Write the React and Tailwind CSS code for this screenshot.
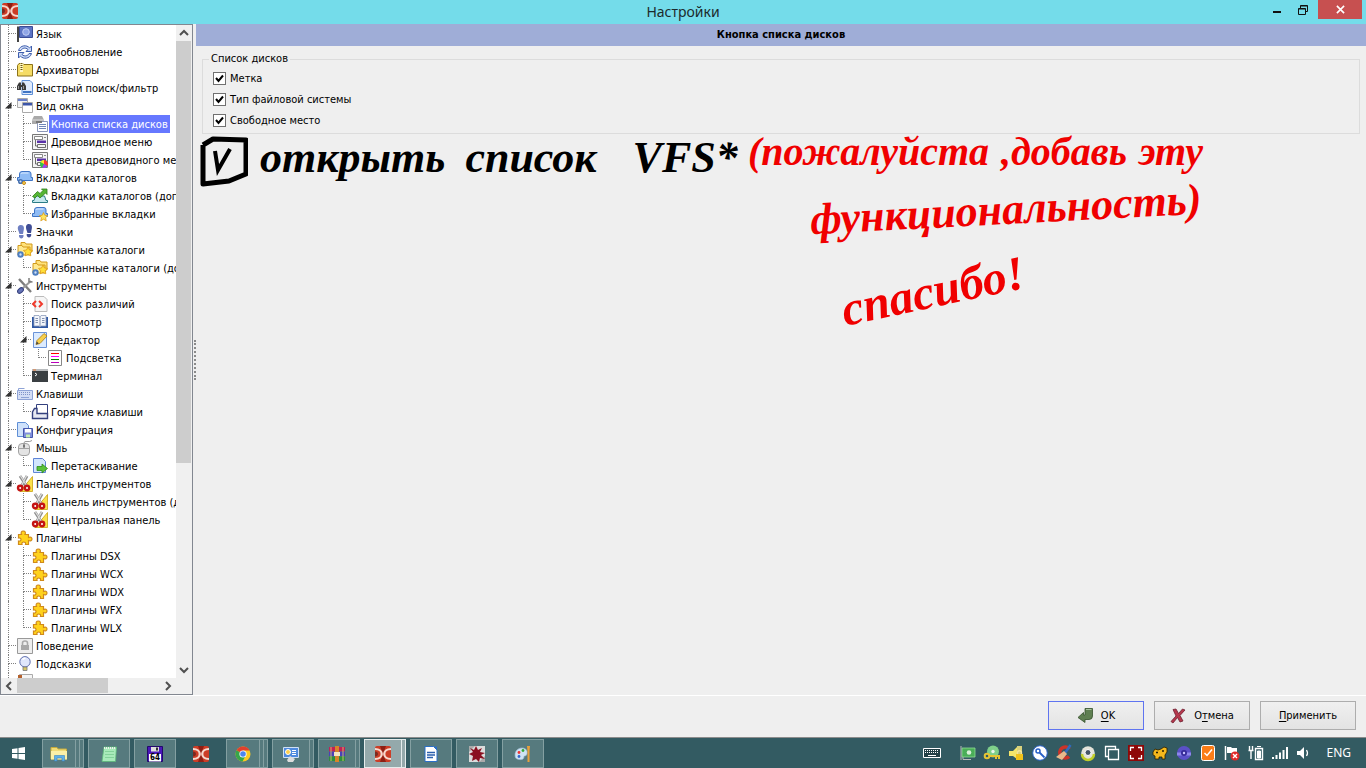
// App.jsx
// Settings window: page tree on the left, disk list options on the right,
// dialog buttons and the desktop taskbar along the bottom.

import { useState } from 'react';
import clsx from 'clsx';

const PUZZLE = (
  <path
    d="M1.5 4.5h3c-1-2 0-3.5 1.8-3.5S9 2.5 8 4.5h3.5v3c2-1 3.5 0 3.5 1.5s-1.5 2.5-3.5 1.5v4H8.5c.5-2-.5-2.5-1.8-2.5s-2.2.8-1.7 2.5H1.5v-3.5c2 .5 2.5-.5 2.5-1.5s-1-2-2.5-1.5z"
    fill="#ffd21c"
    stroke="#d08a1c"
    strokeWidth="1.2"
  />
);

const SCISSORS = (
  <>
    <path d="M15.5.5v15H3z" fill="#fbe14a" stroke="#c9a312" strokeWidth=".8" />
    <path d="M3 0l6.5 10M10 0L4.5 10" stroke="#8d8d8d" strokeWidth="2.8" />
    <path d="M3.5 0l6 9.5M9.5 0l-5 9.5" stroke="#dedede" strokeWidth="1.2" />
    <circle cx="3.2" cy="12" r="2.2" fill="#fff" stroke="#c41414" strokeWidth="2.4" />
    <circle cx="10" cy="12" r="2.2" fill="#fff" stroke="#c41414" strokeWidth="2.4" />
  </>
);

const FOLDERS = (
  <>
    <path d="M4 .5h4L9 2h6v8H4z" fill="#ffe27a" stroke="#d29a1c" />
    <path d="M1 3.5h4L6 5h7v8H1z" fill="#ffe98f" stroke="#d29a1c" />
    <path d="M11 5l1.500 3 3 .4-2.200 2.200.5 3.200-2.800-1.500-2.800 1.500.5-3.200L6.500 8.400l3-.4z" fill="#ffe03a" stroke="#dd9b17" strokeWidth=".8" />
    <circle cx="3.5" cy="12.5" r="2.2" fill="#cfe0f7" stroke="#4e7ec0" strokeWidth="2" />
  </>
);

const TAB = (
  <>
    <path d="M.5 7.5h2V4q0-2.500 2.500-2.500h7Q14 1.500 14 4v3.500h1.500v3H.5z" fill="#8fbcf5" stroke="#3f74c4" />
    <path d="M4 4q0-1 1-1h6.5" stroke="#dcebff" />
  </>
);

const MENU = (
  <>
    <path d="M.5.5h15v15H.5z" fill="#f4f4f4" stroke="#777" />
    <path d="M2.5 2.5h8v3h-8z" fill="#fff" stroke="#888" />
    <path d="M12 3.5h2" stroke="#888" />
    <path d="M5 6.5h9V9H5z" fill="#5a32a8" />
    <path d="M3.5 6v6h2M5.5 10.5h8v3h-8z" stroke="#6d6d6d" fill="none" />
  </>
);

const DC = (
  <>
    <rect width="16" height="16" rx="2" fill="#cc3d26" />
    <path d="M5 0h6L8 8zM5 16h6L8 8z" fill="#8e1f14" />
    <path d="M0 3c9 0 9 10 0 10M16 3c-9 0-9 10 0 10" fill="none" stroke="#f6d9cf" strokeWidth="2.2" />
    <path d="M0 5.5c4 0 4 5 0 5z" fill="#7c2a20" />
  </>
);

const ICONS = {
  dc: DC,
  flag: (
    <>
      <path d="M1 .5V16" stroke="#444" strokeWidth="2" />
      <path d="M2.5.5h13v11h-13z" fill="#5c74c4" stroke="#3b4d96" />
      <circle cx="9" cy="6" r="3.3" fill="#8fa5e6" stroke="#c3cff5" />
    </>
  ),
  refresh: (
    <>
      <path d="M1.5 6.5C3 1 10 .5 12.5 4l2-2v5.5H9l2-2C8.500 3 5 4 4 6.500z" fill="#cfdcf7" stroke="#3f5fae" />
      <path d="M14.5 9.5C13 15 6 15.500 3.500 12l-2 2V8.500H7l-2 2c2.500 2.500 6 1.500 7-1z" fill="#cfdcf7" stroke="#3f5fae" />
    </>
  ),
  archive: (
    <>
      <path d="M.5 3.5L2 1.500h4l1 1h8.500V14H.5z" fill="#f5dc66" stroke="#8d7318" />
      <path d="M4.5 1v9" stroke="#fff6c0" strokeWidth="3" />
      <path d="M4.5 1v8" stroke="#6a5610" strokeWidth="2" strokeDasharray="1 1" />
    </>
  ),
  search: (
    <>
      <path d="M5 .5h8L15.500 3v11.500H5z" fill="#dfeafc" stroke="#5f8fd6" />
      <path d="M6 12h8.5" stroke="#3f74c4" strokeWidth="2" />
      <path d="M0 6l2-3.500h2V10H0zM5 2.500h2L9 6v4H5zM3 5h3v2H3z" fill="#3a3a3a" />
      <path d="M1.5 6v3M6.500 6v3" stroke="#999" />
    </>
  ),
  windows: (
    <>
      <path d="M.5.5h10v9H.5z" fill="#f2f2f2" stroke="#aaa" />
      <path d="M1 1h9v2H1z" fill="#6a80cc" />
      <path d="M5.5 4.5h10v10h-10z" fill="#fff" stroke="#aaa" />
      <path d="M6 5h9v2.5H6z" fill="#3c55a8" />
    </>
  ),
  drive: (
    <>
      <path d="M0 4l2-4h8l2 4v4H0z" fill="#a9a9a9" />
      <path d="M0 4h12" stroke="#ddd" />
      <path d="M5.5 5.5h10v10h-10z" fill="#fff" stroke="#8d98b8" />
      <path d="M7 8.5h7M7 10.500h7M7 12.500h7" stroke="#6f86b8" />
      <path d="M4 6h6" stroke="#777" strokeWidth="2" />
    </>
  ),
  menu: MENU,
  menuColors: (
    <>
      {MENU}
      <circle cx="12" cy="12" r="4" fill="#35c04a" />
      <path d="M12 12V8a4 4 0 0 1 3.5 6z" fill="#f33" />
      <path d="M12 12l3.5 2a4 4 0 0 1-5.300 1.500z" fill="#a43df0" />
      <path d="M12 12V8a4 4 0 0 0-3.5 2z" fill="#ffe12e" />
    </>
  ),
  tab: (
    <>
      {TAB}
      <circle cx="3.5" cy="11.5" r="1.8" fill="#cfe0f7" stroke="#4770ad" strokeWidth="1.5" />
      <circle cx="7" cy="13" r="1.5" fill="#ffd257" stroke="#c28a1a" />
    </>
  ),
  tabUp: (
    <>
      <path d="M.5 14.5v-2H2L3.500 8h9l1.500 4.500h1.500v2z" fill="#c6e8ee" stroke="#2b7d86" />
      <path d="M.5 8.5l5-5 2.500 2 3-3L9.500 1H15v5.500L13.500 5 8 10 5.500 7.500 3 10z" fill="#56b534" stroke="#2f7d1a" strokeWidth=".8" />
    </>
  ),
  tabStar: (
    <>
      {TAB}
      <path d="M11.5 6.5l1.300 2.800 3 .3-2.200 2 .6 3.200-2.700-1.600-2.700 1.600.6-3.200-2.200-2 3-.3z" fill="#ffe45c" stroke="#d99c1e" strokeWidth=".8" />
    </>
  ),
  steps: (
    <>
      <path d="M4 1c3 0 3.500 3 2.500 6L6 10H2.500l-1-3C0 3.500 1 1 4 1zM2 11h4.500v1.500q-.5 2-2.200 2T2 12.500z" fill="#6e7fc2" />
      <path d="M12 0c3 0 3.500 3 2.500 6L14 9h-3.500l-1-3C8.500 2.500 9 0 12 0zM9.700 10h4.500v1.500q-.5 2-2.200 2t-2.300-2z" fill="#3f4d96" />
    </>
  ),
  folders: FOLDERS,
  tools: (
    <>
      <path d="M2 1l12 13" stroke="#7d7d7d" strokeWidth="2.4" />
      <path d="M14 3l-8 7" stroke="#9a9a9a" strokeWidth="2" />
      <path d="M12 0v3.5l3.500.5" stroke="#7d7d7d" fill="none" strokeWidth="1.5" />
      <ellipse cx="3.5" cy="12.5" rx="3.3" ry="2.2" transform="rotate(-40 3.500 12.500)" fill="#6674b8" stroke="#37427e" />
    </>
  ),
  diff: (
    <>
      <path d="M3 .5h9l3 3v12H3z" fill="#f6f6f6" stroke="#bbb" />
      <path d="M4 5L1 8l3 3M7 5l3 3-3 3" fill="none" stroke="#f03a2c" strokeWidth="2" />
    </>
  ),
  book: (
    <>
      <path d="M0 3h16v11H0z" fill="#2f58a4" />
      <path d="M2 1.5h5L8 3l1-1.500h5V12H9l-1 1-1-1H2z" fill="#f3f6fb" stroke="#8d9cba" strokeWidth=".8" />
      <path d="M8 3v9.5M3.500 4.500H6M3.500 6.500H6M3.500 8.500H6M10 4.500h2.500M10 6.500h2.500M10 8.500h2.500" stroke="#8291b0" />
    </>
  ),
  edit: (
    <>
      <path d="M1.5.5h13v15h-13z" fill="#dcebff" stroke="#6a93d8" />
      <path d="M4 12.5l1-4 7-7L15 4l-7 7.500z" fill="#f7cf4c" stroke="#a97a14" strokeWidth=".8" />
      <path d="M4 12.5l.8-3 2 2z" fill="#444" />
    </>
  ),
  highlight: (
    <>
      <path d="M1.5.5h13v15h-13z" fill="#fff" stroke="#888" />
      <path d="M4 3.5h8" stroke="#f00" />
      <path d="M4 6.5h8" stroke="#f0f" />
      <path d="M4 9.5h8" stroke="#080" />
      <path d="M4 12.5h8" stroke="#b0b" />
    </>
  ),
  terminal: (
    <>
      <path d="M0 1h16v13H0z" fill="#3a3f42" />
      <path d="M0 1h16v2H0z" fill="#b9bcbe" />
      <path d="M1 2h3" stroke="#e8742c" />
      <path d="M3 5l2 1.500L3 8" fill="none" stroke="#fff" />
    </>
  ),
  keyboard: (
    <>
      <path d="M.5 4.5h15v9H.5z" fill="#d3ddf5" stroke="#8ea3d6" />
      <path d="M2 6.5h12M2 8.500h12" stroke="#7f93c8" strokeDasharray="1 1" />
      <path d="M4 11.5h8M1.500 4V2.500h6" stroke="#8ea3d6" fill="none" />
    </>
  ),
  hotkeys: (
    <>
      <path d="M4.5.5h11v9h-11z" fill="#fff" stroke="#33407e" />
      <path d="M2.5 4.5H5v5h10.500v5H.5V8z" fill="#e6e8f2" stroke="#33407e" strokeWidth="1.4" />
    </>
  ),
  config: (
    <>
      <path d="M.5.5h8l3 3v11H.5z" fill="#cfe2fb" stroke="#5f8fd6" />
      <path d="M6.5 6.5h9v9h-9z" fill="#8090dc" stroke="#4656ac" />
      <path d="M8 7h6v3.5H8z" fill="#fff" />
      <path d="M9 12.5h4v3H9z" fill="#c6efb0" />
    </>
  ),
  mouse: (
    <>
      <path d="M7 3q0-2 3-1.500t5-1" fill="none" stroke="#999" />
      <rect x="1.5" y="3.5" width="11" height="12" rx="3.5" fill="#e4e4e4" stroke="#a2a2a2" />
      <path d="M1.5 8.5h11M7 3.500v5" stroke="#a2a2a2" />
      <path d="M6 4.5h2v3H6z" fill="#777" />
    </>
  ),
  drag: (
    <>
      <path d="M1.5.5h9l3 3v11h-12z" fill="#d3e6fd" stroke="#5f84d6" />
      <path d="M5 8.5h5V6l5.500 4.500L10 15v-2.500H5z" fill="#5ac23a" stroke="#2f8a1c" strokeWidth=".8" />
    </>
  ),
  scissors: SCISSORS,
  puzzle: PUZZLE,
  lock: (
    <>
      <path d="M.5.5h15v15H.5z" fill="#eee" stroke="#999" />
      <path d="M4 7h8v5H4z" fill="#a9a9a9" />
      <path d="M5.5 7V5q0-2 2.500-2t2.500 2v2" fill="none" stroke="#a9a9a9" strokeWidth="1.6" />
    </>
  ),
  bulb: (
    <>
      <circle cx="8" cy="5.8" r="5.2" fill="#dfe6fb" stroke="#5f6fae" />
      <path d="M5.5 3.5Q7 2 8.500 2.500" fill="none" stroke="#fff" strokeWidth="1.5" />
      <path d="M6 11h4v3.5H6z" fill="#d8c86a" stroke="#777" strokeWidth=".8" />
    </>
  ),
  page: (
    <>
      <path d="M2.5.5h13v15h-13z" fill="#f5f5f5" stroke="#aaa" />
      <path d="M1 1h4v3H1z" fill="#b5622e" />
    </>
  ),
  explorer: (
    <>
      <path d="M0 1.5h6L7 3h8.500v10H0z" fill="#f0dc78" stroke="#c8ac3c" />
      <path d="M0 5h16v8.5H0z" fill="#fbf0a8" />
      <path d="M3.5 15V9.5h10V15H11v-3H6v3z" fill="#5fb0e8" stroke="#3784c0" strokeWidth=".6" />
    </>
  ),
  notepad: (
    <>
      <path d="M3 1h12.5l-1 14.500H1z" fill="#a8eaba" stroke="#5cb878" strokeWidth=".8" />
      <path d="M3 2h12" stroke="#eee" strokeWidth="2" strokeDasharray="1 1" />
      <path d="M4 5.5h9M4 8.500h9M4 11.500h9" stroke="#7acb92" strokeWidth=".8" />
    </>
  ),
  floppy: (
    <>
      <path d="M.5.5h15v15H.5z" fill="#4a18b8" stroke="#22086c" />
      <path d="M4 1h8v4.5H4z" fill="#ddd" />
      <path d="M9 1.5h2v3H9z" fill="#333" />
      <path d="M2 8h12v7.5H2z" fill="#fff" />
    </>
  ),
  chrome: (
    <>
      <circle cx="8" cy="8" r="7.5" fill="#fbc920" />
      <path d="M8 8L1.500 4.300A7.500 7.500 0 0 1 14.700 4.500H8z" fill="#e0402f" />
      <path d="M8 8L1.500 4.300A7.500 7.500 0 0 0 7.500 15.500L11 9z" fill="#37a64a" />
      <circle cx="8" cy="8" r="3.6" fill="#fff" />
      <circle cx="8" cy="8" r="2.8" fill="#4b86ee" />
    </>
  ),
  panel: (
    <>
      <path d="M.5 1.5h15v10H.5z" fill="#4f8ade" stroke="#cfe0f5" />
      <circle cx="5" cy="6" r="2.5" fill="#ffcf4a" stroke="#fff" />
      <path d="M9 4.5h4M9 6.500h4M9 8.500h4" stroke="#fff" />
      <path d="M4 14l3-4 5 3-2 3H5z" fill="#ddd" />
    </>
  ),
  winrar: (
    <>
      <path d="M0 1h16v4.5H0z" fill="#c02058" />
      <path d="M0 5.7h16v4.5H0z" fill="#4a40b8" />
      <path d="M0 10.5h16V15H0z" fill="#2e8f3c" />
      <path d="M6 0h4v16H6z" fill="#d8842a" />
      <path d="M5 6h6v4H5z" fill="#f3e4c0" />
      <path d="M2 1v14M14 1v14" stroke="#e8d06a" strokeWidth=".8" />
    </>
  ),
  writer: (
    <>
      <path d="M2 .5h8.5L14 4v11.500H2z" fill="#fff" stroke="#2a6fc8" />
      <path d="M10.5.5H14V4z" fill="#2a6fc8" />
      <path d="M4 6.5h8M4 9h8M4 11.500h6" stroke="#2a5fae" strokeWidth="1.3" />
    </>
  ),
  splat: (
    <>
      <path d="M0 0h16v16H0z" fill="#dcdcdc" />
      <path d="M0 0h6L0 6zM16 16h-6l6-6z" fill="#aaa" />
      <path d="M1 2l4 2 2-4 2 4 4-2-2 4 5 1-4 2 4 4-5-1-1 4-3-3-4 2 1-5-4-2 4-2z" fill="#8a1020" />
    </>
  ),
  paint: (
    <>
      <path d="M0 9c0-4 3-7 7-7s6 3 5 6-3 1-3 3-2 3-5 2.500S0 12 0 9z" fill="#cfe3f3" stroke="#9ab8d0" strokeWidth=".7" />
      <circle cx="4" cy="6.5" r="1.4" fill="#e33" />
      <circle cx="8" cy="4.5" r="1.4" fill="#3a3" />
      <circle cx="4" cy="10.5" r="1.4" fill="#36c" />
      <path d="M12 0h3l-.5 5v11h-2V5z" fill="#e8a03a" />
    </>
  ),
  trayKeyboard: (
    <>
      <path d="M-.5 3.5h17v9h-17z" fill="#223f45" stroke="#fff" />
      <path d="M1 5.5h14M1 7.500h14" stroke="#fff" strokeDasharray="1 1" />
      <path d="M4 10.5h8" stroke="#fff" />
    </>
  ),
  card: (
    <>
      <path d="M2 3h13v9H2z" fill="#4aae58" stroke="#8fdc96" strokeWidth=".8" />
      <path d="M1 1v14M3 12v2.500h8" stroke="#bbb" fill="none" />
      <circle cx="9" cy="7.5" r="2.3" fill="#d9efda" />
    </>
  ),
  key: (
    <>
      <circle cx="9" cy="6.5" r="6" fill="#7fd08a" />
      <circle cx="9" cy="6.5" r="1.7" fill="#e9f7ea" />
      <circle cx="3" cy="11" r="2.3" fill="none" stroke="#e6c534" strokeWidth="2" />
      <path d="M5 11h10v3M12 11v3" stroke="#e6c534" strokeWidth="2" fill="none" />
    </>
  ),
  trayLock: (
    <>
      <path d="M1 6h4l4-4v12l-4-3H1z" fill="#f5e66a" />
      <path d="M9 1h5v13l-5-1z" fill="#d9d27e" />
      <path d="M8 9h7v6H8z" fill="#f2c31a" />
      <path d="M9.5 9V7q2-2.500 4 0v2" fill="none" stroke="#f7e59a" strokeWidth="1.3" />
    </>
  ),
  keyRound: (
    <>
      <circle cx="8" cy="8" r="7.3" fill="#fff" stroke="#2860c8" />
      <circle cx="6" cy="6" r="2" fill="none" stroke="#2860c8" strokeWidth="1.5" />
      <path d="M7.5 7.5l5 5" stroke="#2860c8" strokeWidth="1.8" />
    </>
  ),
  ccleaner: (
    <>
      <path d="M13.5 4A5.500 5.500 0 1 0 13 11.500" fill="none" stroke="#cc3328" strokeWidth="3.5" />
      <path d="M14.5 0L9 8" stroke="#2f6bbd" strokeWidth="2.5" />
      <path d="M8 6l3 3-5 6-6-3z" fill="#e9b98a" />
    </>
  ),
  webcam: (
    <>
      <circle cx="8" cy="8" r="6.8" fill="#e4e4da" />
      <path d="M2 9a6 6 0 0 0 12 0" fill="none" stroke="#c0ce2a" strokeWidth="2.5" />
      <circle cx="8" cy="7.5" r="3" fill="#456" stroke="#fff" />
    </>
  ),
  copies: <path d="M4 11.5H1.500v-10h10V4M4.500 4.500h10v10h-10z" fill="none" stroke="#fff" strokeWidth="1.3" />,
  capture: (
    <>
      <path d="M0 0h16v16H0z" fill="#8e0808" />
      <path d="M2.5 6V2.500H6M10 2.500h3.500V6M13.500 10v3.500H10M6 13.500H2.500V10" fill="none" stroke="#fff" strokeWidth="1.3" />
    </>
  ),
  mule: (
    <>
      <path d="M1 7l2-3 3 1 3-1 3-2 3 1v4l-2 3v4h-3v-2H7v2H3v-3L1 10z" fill="#f5b81c" stroke="#2a1e00" strokeWidth=".8" />
      <path d="M4 7.5h2M10 6h2" stroke="#2a1e00" strokeWidth="1.5" />
    </>
  ),
  disc: (
    <>
      <circle cx="8" cy="8" r="7" fill="#5a50c8" />
      <path d="M1 9h14" stroke="#8e86ea" strokeWidth="3" />
      <circle cx="8" cy="8" r="3" fill="#352a98" />
      <circle cx="8" cy="8" r="1.2" fill="#c9c4ff" />
    </>
  ),
  check: (
    <>
      <rect x="1.5" y=".5" width="13" height="15" rx="2" fill="#fb7d17" stroke="#fff" />
      <path d="M4.5 8L7 10.500l5-6" fill="none" stroke="#fff" strokeWidth="1.5" />
    </>
  ),
  flagError: (
    <>
      <path d="M1.5 1v14" stroke="#fff" strokeWidth="1.5" />
      <path d="M3 2h4l1 1h5v6H8L7 8H3z" fill="#fff" />
      <circle cx="11" cy="11" r="4.5" fill="#e02828" />
      <path d="M9 9l4 4M13 9l-4 4" stroke="#fff" strokeWidth="1.4" />
    </>
  ),
  battery: (
    <>
      <path d="M7.5 3.5h7v11h-7z" fill="#335b62" stroke="#fff" strokeWidth="1.4" />
      <path d="M9 1.5h4M9.500 6h3v7h-3z" stroke="#fff" fill="#fff" />
      <path d="M1.5 1v4M4.500 1v4M.5 5.500h5M3 6v8" stroke="#fff" strokeWidth="1.4" />
    </>
  ),
  signal: <path d="M1 14v-2M4.500 14v-4M8 14V7.500M11.500 14V5M15 14V2" stroke="#fff" strokeWidth="2" />,
  volume: (
    <>
      <path d="M1 6h3l4-4v12l-4-4H1z" fill="#fff" />
      <path d="M10.5 5q2 3 0 6" fill="none" stroke="#fff" strokeWidth="1.3" />
    </>
  ),
  ok: (
    <>
      <path d="M8 .5h7.5V8q0 3.500-3.500 3.500H8v3l-7-5 5.500-5V7H8z" fill="#5f7f52" stroke="#35502c" strokeWidth=".8" />
      <path d="M9 1.5h5.5" stroke="#a9c29e" />
    </>
  ),
  cancel: (
    <path d="M3 1.5l3-.5 2.500 4.500 4-4.500L15 2l-5 5.500 3 5.500-3 1-2.500-4.500L3 15l-2-1.500L6 8z" fill="#b5384c" stroke="#6d2030" strokeWidth=".8" />
  ),
};

function Icon({ name, className = 'size-4' }) {
  return (
    <svg viewBox="0 0 16 16" fill="none" className={clsx('shrink-0 overflow-visible', className)} aria-hidden="true">
      {ICONS[name]}
    </svg>
  );
}

const PAGES = [
  { icon: 'flag', label: 'Язык' },
  { icon: 'refresh', label: 'Автообновление' },
  { icon: 'archive', label: 'Архиваторы' },
  { icon: 'search', label: 'Быстрый поиск/фильтр' },
  {
    icon: 'windows',
    label: 'Вид окна',
    children: [
      { icon: 'drive', label: 'Кнопка списка дисков' },
      { icon: 'menu', label: 'Древовидное меню' },
      { icon: 'menuColors', label: 'Цвета древовидного меню' },
    ],
  },
  {
    icon: 'tab',
    label: 'Вкладки каталогов',
    children: [
      { icon: 'tabUp', label: 'Вкладки каталогов (дополнительно)' },
      { icon: 'tabStar', label: 'Избранные вкладки' },
    ],
  },
  { icon: 'steps', label: 'Значки' },
  {
    icon: 'folders',
    label: 'Избранные каталоги',
    children: [{ icon: 'folders', label: 'Избранные каталоги (дополнительно)' }],
  },
  {
    icon: 'tools',
    label: 'Инструменты',
    children: [
      { icon: 'diff', label: 'Поиск различий' },
      { icon: 'book', label: 'Просмотр' },
      { icon: 'edit', label: 'Редактор', children: [{ icon: 'highlight', label: 'Подсветка' }] },
      { icon: 'terminal', label: 'Терминал' },
    ],
  },
  { icon: 'keyboard', label: 'Клавиши', children: [{ icon: 'hotkeys', label: 'Горячие клавиши' }] },
  { icon: 'config', label: 'Конфигурация' },
  { icon: 'mouse', label: 'Мышь', children: [{ icon: 'drag', label: 'Перетаскивание' }] },
  {
    icon: 'scissors',
    label: 'Панель инструментов',
    children: [
      { icon: 'scissors', label: 'Панель инструментов (дополнительно)' },
      { icon: 'scissors', label: 'Центральная панель' },
    ],
  },
  {
    icon: 'puzzle',
    label: 'Плагины',
    children: [
      { icon: 'puzzle', label: 'Плагины DSX' },
      { icon: 'puzzle', label: 'Плагины WCX' },
      { icon: 'puzzle', label: 'Плагины WDX' },
      { icon: 'puzzle', label: 'Плагины WFX' },
      { icon: 'puzzle', label: 'Плагины WLX' },
    ],
  },
  { icon: 'lock', label: 'Поведение' },
  { icon: 'bulb', label: 'Подсказки' },
  { icon: 'page', label: '' },
];

// Flatten the tree; guides[i] says whether the line of level i goes on below.
function flatten(nodes, guides = []) {
  return nodes.flatMap((node, i) => {
    const more = i < nodes.length - 1 || guides.length === 0;
    const own = { ...node, guides, more };
    return [own, ...flatten(node.children ?? [], [...guides, more])];
  });
}

const ROWS = flatten(PAGES);

function TreeRow({ row, selected, onSelect }) {
  return (
    <li className="flex h-[18px] items-center whitespace-nowrap">
      {row.guides.map((on, i) => (
        <span key={i} className="h-full w-[15px] shrink-0 pl-[7px]">
          <span className={clsx('block h-full', on && 'border-l border-dotted border-[#808080]')} />
        </span>
      ))}
      <span className="relative grid h-full w-[15px] shrink-0 grid-rows-2 pl-[7px]">
        <span className="border-b border-l border-dotted border-[#808080]" />
        <span className={clsx(row.more && 'border-l border-dotted border-[#808080]')} />
        {row.children && (
          <svg viewBox="0 0 7 7" className="absolute top-[5px] left-1 size-[7px]" aria-hidden="true">
            <path d="M6.5 0v6.5H0z" fill="#333" />
          </svg>
        )}
      </span>
      <Icon name={row.icon} className="mx-px size-4" />
      <button
        type="button"
        onClick={onSelect}
        className={clsx('h-[18px] px-0.5 pt-0.5 text-left', selected ? 'bg-[#6678ff] text-white' : 'text-black')}
      >
        {row.label}
      </button>
    </li>
  );
}

function ScrollArrow({ d, label, className }) {
  return (
    <button type="button" aria-label={label} className={clsx('flex shrink-0 items-center justify-center', className)}>
      <svg viewBox="0 0 10 10" className="size-[10px]" aria-hidden="true">
        <path d={d} fill="none" stroke="#505050" strokeWidth="2" />
      </svg>
    </button>
  );
}

function PageTree() {
  const [current, setCurrent] = useState('Кнопка списка дисков');
  return (
    <nav className="flex w-[193px] shrink-0 flex-col border border-[#828790] bg-[#f0f0f0]">
      <div className="flex min-h-0 flex-1">
        <ul className="min-w-0 flex-1 overflow-hidden bg-white">
          {ROWS.map((row, i) => (
            <TreeRow key={i} row={row} selected={row.label === current} onSelect={() => setCurrent(row.label)} />
          ))}
        </ul>
        <div className="flex w-4 flex-col">
          <ScrollArrow label="Вверх" d="M1 7l4-4 4 4" className="h-4" />
          <div className="min-h-0 flex-1">
            <div className="h-[68%] w-[15px] bg-[#cdcdcd]" />
          </div>
          <ScrollArrow label="Вниз" d="M1 3l4 4 4-4" className="h-4" />
        </div>
      </div>
      <div className="flex h-4 pr-4">
        <ScrollArrow label="Влево" d="M7 1L3 5l4 4" className="w-4" />
        <div className="flex-1">
          <div className="h-[15px] w-[91px] bg-[#cdcdcd]" />
        </div>
        <ScrollArrow label="Вправо" d="M3 1l4 4-4 4" className="w-4" />
      </div>
    </nav>
  );
}

function CheckOption({ label }) {
  return (
    <label className="flex h-[21px] items-center gap-1">
      <span className="grid">
        <input
          type="checkbox"
          defaultChecked
          className="peer col-start-1 row-start-1 size-[13px] appearance-none border border-[#707070] bg-white"
        />
        <svg viewBox="0 0 13 13" className="pointer-events-none invisible col-start-1 row-start-1 size-[13px] peer-checked:visible" aria-hidden="true">
          <path d="M3 6l2.500 3L10 3.500" fill="none" stroke="#000" strokeWidth="2" />
        </svg>
      </span>
      <span className="pt-0.5">{label}</span>
    </label>
  );
}

// Hand-drawn notes laid over the free part of the panel.
function Notes() {
  return (
    <div className="pointer-events-none absolute inset-0 font-['Liberation_Serif',serif] text-[44px] leading-none font-bold whitespace-nowrap italic">
      <svg viewBox="0 0 48 52" className="absolute top-28 left-1 h-[52px] w-12" aria-hidden="true">
        <path d="M3 9L3 48l26-3 17-7V4L13 3 3 9" fill="none" stroke="#000" strokeWidth="5" strokeLinejoin="round" />
        <path d="M15 15l3 19L30 13" fill="none" stroke="#000" strokeWidth="4" />
      </svg>
      <p className="absolute top-28 left-16 flex gap-5 text-black">
        <span>открыть</span>
        <span>список</span>
        <span className="pl-4">VFS*</span>
      </p>
      <div className="text-[#f00000]">
        <p className="absolute top-[108px] left-[552px] flex gap-3 text-[40px]">
          <span>(пожалуйста</span>
          <span>,добавь</span>
          <span>эту</span>
        </p>
        <p className="absolute top-[164px] left-[614px] -rotate-3">функциональность)</p>
        <p className="absolute top-[243px] left-[644px] -rotate-12 text-[48px]">спасибо!</p>
      </div>
    </div>
  );
}

function DialogButton({ icon, hotkey, before = '', after, primary }) {
  return (
    <button
      type="button"
      className={clsx(
        'flex h-[29px] w-24 items-center justify-center gap-2 border bg-linear-to-b from-[#f0f0f0] to-[#e3e3e3]',
        primary ? 'border-[#5f74f0]' : 'border-[#adadad]',
      )}
    >
      {icon && <Icon name={icon} />}
      <span className="pt-0.5">
        {before}
        <u className="underline-offset-2">{hotkey}</u>
        {after}
      </span>
    </button>
  );
}

const TASKS = [
  { icon: 'explorer', title: 'Проводник', extra: 2 },
  { icon: 'notepad', title: 'Блокнот' },
  { icon: 'floppy', title: 'Диск', badge: '64' },
  { icon: 'dc', title: 'Double Commander', pinned: true },
  { icon: 'chrome', title: 'Chrome', extra: 2 },
  { icon: 'panel', title: 'Панель', extra: 1 },
  { icon: 'winrar', title: 'WinRAR', extra: 1 },
  { icon: 'dc', title: 'Настройки', extra: 1, active: true },
  { icon: 'writer', title: 'Writer' },
  { icon: 'splat', title: 'Просмотр' },
  { icon: 'paint', title: 'Paint' },
];

const TRAY = [
  'card', 'key', 'trayLock', 'keyRound', 'ccleaner', 'webcam', 'copies', 'capture',
  'mule', 'disc', 'check', 'flagError', 'battery', 'signal', 'volume',
];

function TaskButton({ task }) {
  const frame = task.active ? 'border-[#e4ecec] bg-[#94a9ab]' : 'border-[#84a0a2] bg-[#567a7e]';
  return (
    <button type="button" aria-label={task.title} className="flex h-full w-[42px]">
      <span
        className={clsx(
          'relative flex h-full min-w-0 flex-1 items-center justify-center border',
          task.pinned ? 'border-transparent' : frame,
        )}
      >
        <Icon name={task.icon} />
        {task.badge && (
          <span className="absolute inset-x-0 bottom-[5px] text-center text-[8px] leading-none font-bold text-black">{task.badge}</span>
        )}
      </span>
      {Array.from({ length: task.extra ?? 0 }, (_, i) => (
        <span key={i} className={clsx('h-full w-1 border-y border-r', frame)} />
      ))}
    </button>
  );
}

function Taskbar() {
  return (
    <footer className="flex h-[30px] shrink-0 items-center bg-[#335b62] pr-[15px]">
      <button type="button" aria-label="Пуск" className="flex h-full w-[42px] items-center pl-3">
        <svg viewBox="0 0 13 13" className="size-[13px]" aria-hidden="true">
          <path d="M0 2l5.5-.8V6H0zM6.500 1L13 0v6H6.500zM0 7h5.500v4.800L0 11zM6.500 7H13v6l-6.500-1z" fill="#fff" />
        </svg>
      </button>
      <div className="flex h-full gap-1 pt-px">
        {TASKS.map((task, i) => (
          <TaskButton key={i} task={task} />
        ))}
      </div>
      <div className="ml-auto flex items-center gap-2">
        <Icon name="trayKeyboard" className="mr-3 size-4" />
        {TRAY.map((name) => (
          <Icon key={name} name={name} />
        ))}
        <span className="pl-1.5 font-['Noto_Sans',sans-serif] text-xs text-white">ENG</span>
      </div>
    </footer>
  );
}

export default function App() {
  return (
    <div className="flex h-screen flex-col overflow-hidden bg-[#efefef] font-['DejaVu_Sans_Condensed','DejaVu_Sans',sans-serif] text-[11px] text-black">
      <header className="flex h-6 shrink-0 items-start bg-[#74dcea]">
        <div className="flex w-[132px] items-center pt-[3px] pl-0.5">
          <Icon name="dc" />
        </div>
        <h1 className="flex-1 text-center font-['Noto_Sans',sans-serif] text-sm leading-6 text-[#1c2a2c]">Настройки</h1>
        <div className="flex h-[19px] w-[132px] items-center justify-end pr-1">
          <button type="button" aria-label="Свернуть" className="flex h-full w-[26px] items-center justify-center">
            <svg viewBox="0 0 10 10" className="size-[10px]" aria-hidden="true">
              <path d="M1 7h8" stroke="#111" strokeWidth="2" />
            </svg>
          </button>
          <button type="button" aria-label="Восстановить" className="mr-0.5 flex h-full w-[26px] items-center justify-center">
            <svg viewBox="0 0 10 10" className="size-[10px]" aria-hidden="true">
              <path d="M.5 3.5h7v6h-7zM2.500 3V.5h7v6H8M.5 4h7M2.500 1h7" fill="none" stroke="#111" />
            </svg>
          </button>
          <button type="button" aria-label="Закрыть" className="flex h-full w-11 items-center justify-center bg-[#c75050]">
            <svg viewBox="0 0 10 10" className="size-[9px]" aria-hidden="true">
              <path d="M1 1l8 8M9 1L1 9" stroke="#fff" strokeWidth="1.8" />
            </svg>
          </button>
        </div>
      </header>

      <div className="flex min-h-0 flex-1">
        <PageTree />
        <div className="flex w-[3px] shrink-0 items-center justify-center">
          <div className="h-10 w-0.5 border-l-2 border-dotted border-[#8a8a8a]" />
        </div>
        <main className="relative min-w-0 flex-1">
          <h2 className="h-[22px] bg-[#9fadd7] text-center text-[11px] leading-[22px] font-bold">Кнопка списка дисков</h2>
          <fieldset className="mx-1.5 mt-1.5 border border-[#dcdcdc] px-2.5 pt-0.5 pb-0.5">
            <legend className="-ml-1 px-0.5 leading-[14px]">Список дисков</legend>
            <CheckOption label="Метка" />
            <CheckOption label="Тип файловой системы" />
            <CheckOption label="Свободное место" />
          </fieldset>
          <Notes />
        </main>
      </div>

      <div className="flex h-[43px] shrink-0 items-start justify-end gap-2.5 border-t border-b border-t-white border-b-[#8c8c8c] pt-[5px] pr-2.5">
        <DialogButton icon="ok" hotkey="O" after="K" primary />
        <DialogButton icon="cancel" before="О" hotkey="т" after="мена" />
        <DialogButton hotkey="П" after="рименить" />
      </div>
      <Taskbar />
    </div>
  );
}
